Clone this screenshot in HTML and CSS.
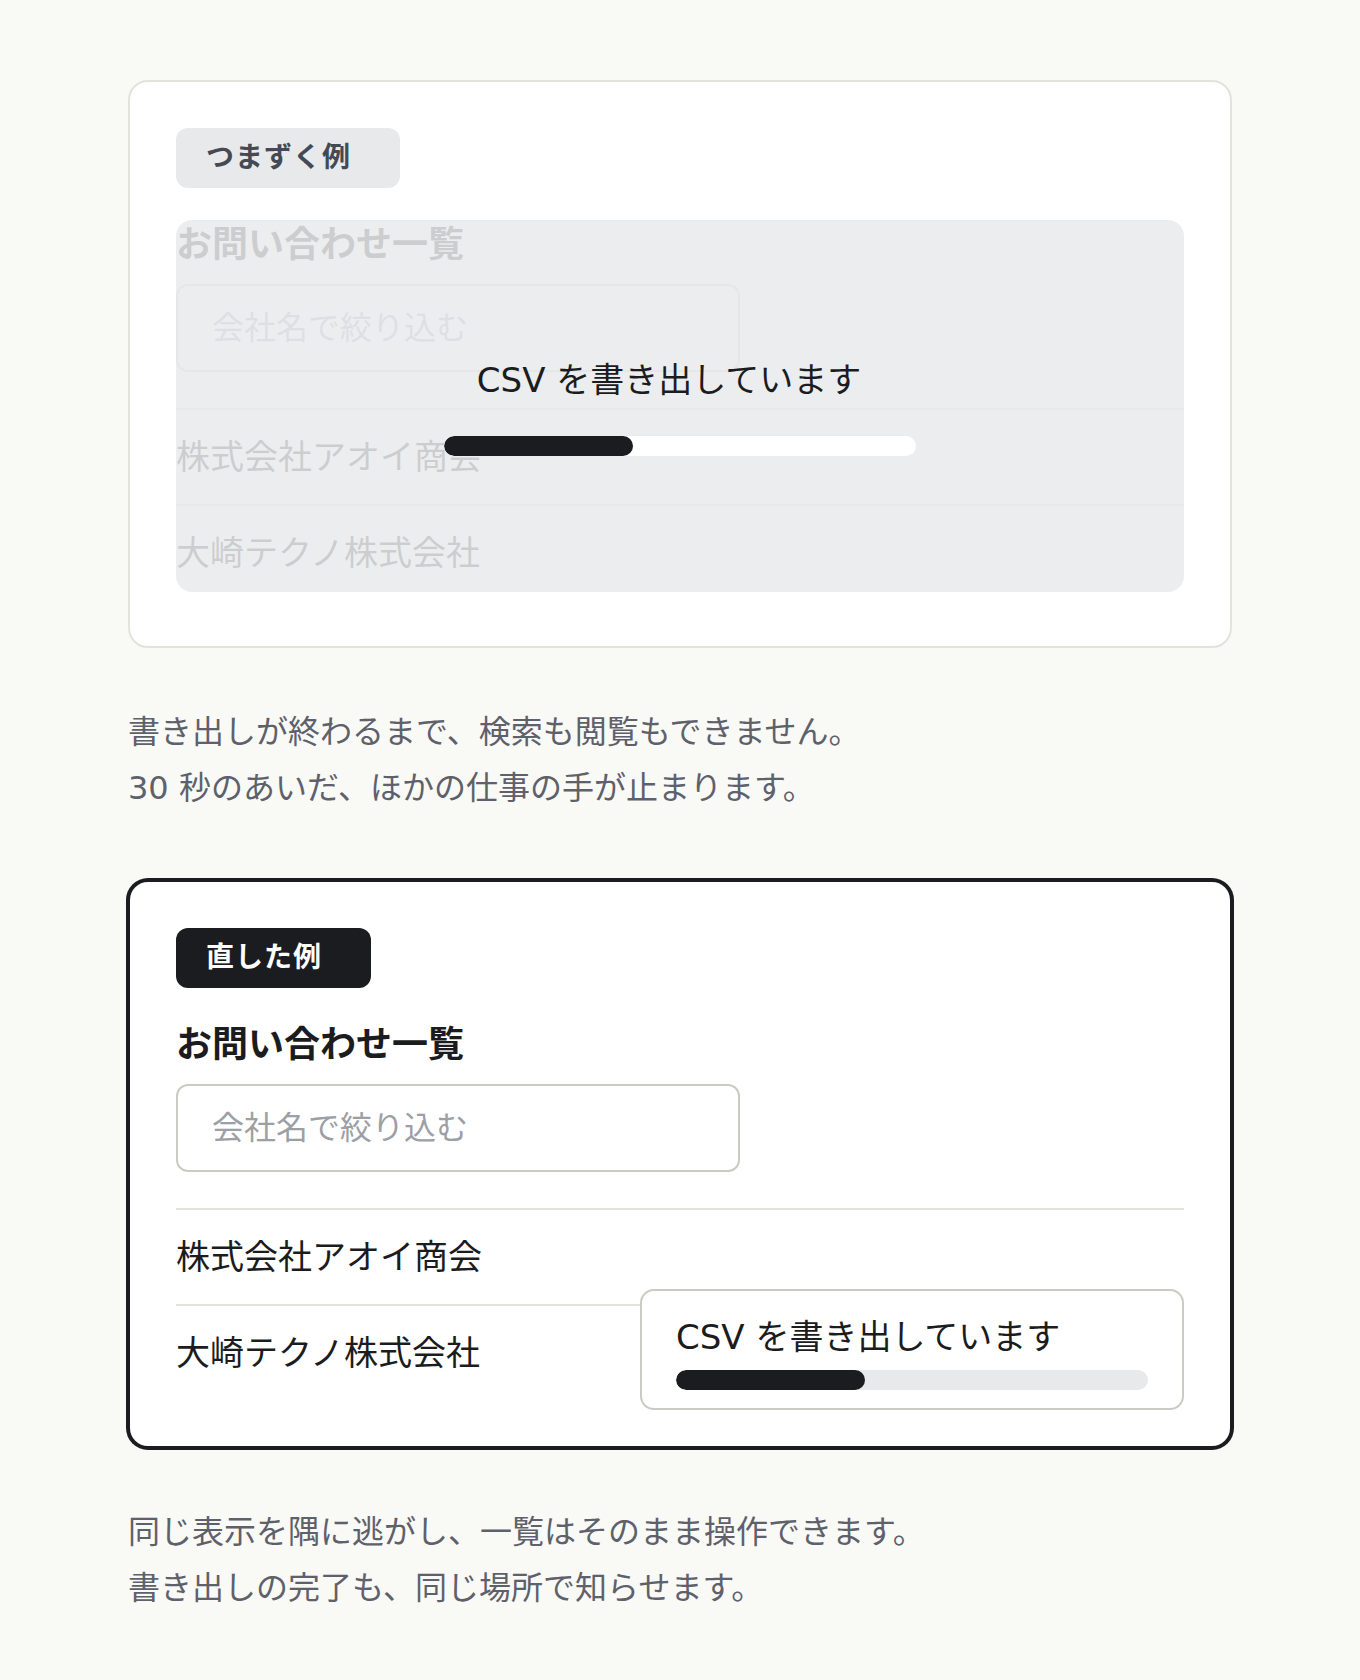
FILE: index.html
```html
<!DOCTYPE html>
<html lang="ja">
<head>
<meta charset="utf-8">
<title>CSV 書き出しの表示</title>
<link rel="stylesheet" href="styles.css">
</head>
<body>
<main class="page">
  <section class="card card-bad">
    <span class="badge badge-bad">つまずく例</span>
    <div class="list-wrap">
      <div class="list">
        <h2 class="list-title">お問い合わせ一覧</h2>
        <input class="filter" type="text" placeholder="会社名で絞り込む">
        <ul class="rows">
          <li class="row">株式会社アオイ商会</li>
          <li class="row">大崎テクノ株式会社</li>
        </ul>
      </div>
      <div class="blocker">
        <p class="blocker-text">CSV を書き出しています</p>
        <div class="bar bar-on-gray"><div class="bar-fill" style="width: 40%"></div></div>
      </div>
    </div>
  </section>
  <p class="caption">書き出しが終わるまで、検索も閲覧もできません。<br>30 秒のあいだ、ほかの仕事の手が止まります。</p>

  <section class="card card-good">
    <span class="badge badge-good">直した例</span>
    <div class="list">
      <h2 class="list-title">お問い合わせ一覧</h2>
      <input class="filter" type="text" placeholder="会社名で絞り込む">
      <ul class="rows">
        <li class="row">株式会社アオイ商会</li>
        <li class="row">大崎テクノ株式会社</li>
      </ul>
    </div>
    <div class="toast">
      <p class="toast-text">CSV を書き出しています</p>
      <div class="bar bar-on-white"><div class="bar-fill" style="width: 40%"></div></div>
    </div>
  </section>
  <p class="caption">同じ表示を隅に逃がし、一覧はそのまま操作できます。<br>書き出しの完了も、同じ場所で知らせます。</p>
</main>
</body>
</html>
```
FILE: styles.css
```css
* { box-sizing: border-box; }

html, body {
  margin: 0;
  padding: 0;
  background: #f9f9f5;
}

body {
  font-family: "DejaVu Sans", "Noto Sans CJK JP", "Noto Sans", sans-serif;
  color: #1b1c20;
}

.page {
  width: 1104px;
  margin: 0 auto;
  padding: 80px 0 64px;
}

.card {
  position: relative;
  background: #ffffff;
  border: 2px solid #e3e3db;
  border-radius: 20px;
  padding: 46px;
  display: flex;
  flex-direction: column;
  align-items: flex-start;
}

.card-good {
  border-color: #1b1c20;
  box-shadow: 0 0 0 2px #1b1c20;
  margin-top: 64px;
}

.badge {
  display: inline-block;
  height: 60px;
  line-height: 60px;
  padding: 0 49px 0 30px;
  border-radius: 12px;
  font-size: 28px;
  font-weight: 700;
  letter-spacing: 1px;
  margin-bottom: 32px;
}

.badge-bad {
  background: #e8e9eb;
  color: #454954;
}

.badge-good {
  background: #1b1c20;
  color: #ffffff;
}

.list-wrap {
  position: relative;
  width: 100%;
}

.list {
  width: 100%;
}

.list-title {
  margin: 0 0 21px;
  font-family: "Noto Sans CJK JP", sans-serif;
  font-size: 36px;
  line-height: 43px;
  font-weight: 700;
}

.filter {
  display: block;
  width: 564px;
  height: 88px;
  border: 2px solid #cbcbc3;
  border-radius: 12px;
  padding: 0 34px;
  font-family: inherit;
  font-size: 32px;
  color: #1b1c20;
  background: #ffffff;
  margin: 0 0 36px;
  outline: none;
}

.filter::placeholder {
  color: #9d9fa6;
}

.rows {
  list-style: none;
  margin: 0;
  padding: 0;
}

.row {
  border-top: 2px solid #e3e3db;
  padding: 23px 0;
  font-size: 34px;
  line-height: 48px;
}

.blocker {
  position: absolute;
  top: 0;
  left: 0;
  right: 0;
  bottom: 8px;
  background: rgba(233, 234, 236, 0.86);
  border-radius: 16px;
  display: flex;
  flex-direction: column;
  align-items: center;
  justify-content: center;
  gap: 32px;
}

.blocker-text {
  margin: 0 22px 0 0;
  font-size: 34px;
  line-height: 48px;
  color: #1b1c20;
}

.bar {
  width: 472px;
  height: 20px;
  border-radius: 10px;
  overflow: hidden;
}

.bar-on-gray { background: #ffffff; }
.bar-on-white { background: #e8e9eb; }

.bar-fill {
  height: 100%;
  background: #1b1c20;
  border-radius: 10px;
}

.toast {
  position: absolute;
  right: 46px;
  bottom: 36px;
  width: 544px;
  background: #ffffff;
  border: 2px solid #cbcbc3;
  border-radius: 14px;
  padding: 22px 34px 18px;
}

.toast-text {
  margin: 0 0 9px;
  font-size: 34px;
  line-height: 48px;
}

.caption {
  margin: 56px 0 0;
  font-size: 32px;
  line-height: 56px;
  color: #5e616c;
}
```
